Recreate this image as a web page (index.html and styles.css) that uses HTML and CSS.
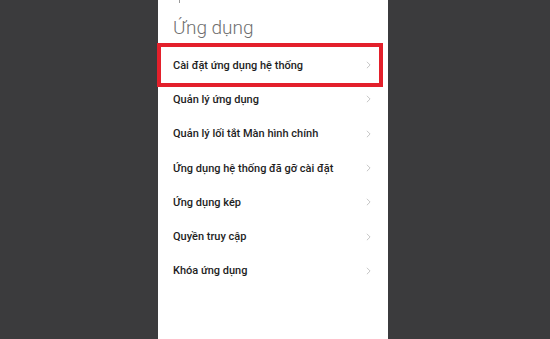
FILE: index.html
```html
<!DOCTYPE html>
<html lang="vi">
<head>
    <meta charset="UTF-8">
    <title>Ứng dụng</title>
    <link rel="stylesheet" href="styles.css">
</head>
<body>
    <div class="screen">
        <span class="top-tick"></span>
        <h1 class="title">Ứng dụng</h1>
        <ul class="menu">
            <li class="menu-item selected">
                <span>Cài đặt ứng dụng hệ thống</span>
                <svg class="chevron" viewBox="0 0 6 10"><polyline points="1,1 5,5 1,9"/></svg>
            </li>
            <li class="menu-item">
                <span>Quản lý ứng dụng</span>
                <svg class="chevron" viewBox="0 0 6 10"><polyline points="1,1 5,5 1,9"/></svg>
            </li>
            <li class="menu-item">
                <span>Quản lý lối tắt Màn hình chính</span>
                <svg class="chevron" viewBox="0 0 6 10"><polyline points="1,1 5,5 1,9"/></svg>
            </li>
            <li class="menu-item">
                <span>Ứng dụng hệ thống đã gỡ cài đặt</span>
                <svg class="chevron" viewBox="0 0 6 10"><polyline points="1,1 5,5 1,9"/></svg>
            </li>
            <li class="menu-item">
                <span>Ứng dụng kép</span>
                <svg class="chevron" viewBox="0 0 6 10"><polyline points="1,1 5,5 1,9"/></svg>
            </li>
            <li class="menu-item">
                <span>Quyền truy cập</span>
                <svg class="chevron" viewBox="0 0 6 10"><polyline points="1,1 5,5 1,9"/></svg>
            </li>
            <li class="menu-item">
                <span>Khóa ứng dụng</span>
                <svg class="chevron" viewBox="0 0 6 10"><polyline points="1,1 5,5 1,9"/></svg>
            </li>
        </ul>
    </div>
</body>
</html>
```

FILE: styles.css
```css
body {
    margin: 0;
    height: 339px;
    overflow: hidden;
    background-color: #3b3b3d;
    font-family: Roboto, 'Noto Sans', sans-serif;
    display: flex;
    padding-left: 158px;
}
.screen {
    position: relative;
    width: 230px;
    height: 339px;
    background-color: #ffffff;
    box-sizing: border-box;
    padding: 0 10px 0 4px;
}
.top-tick {
    position: absolute;
    top: 0;
    left: 21px;
    width: 1px;
    height: 3px;
    background-color: #9a9a9a;
}
.title {
    margin: 0;
    padding: 16px 0 0 11px;
    height: 32px;
    font-size: 19px;
    font-weight: 300;
    color: #6f6f6f;
    line-height: 24px;
}
.menu {
    list-style: none;
    margin: 0;
    padding: 0;
}
.menu-item {
    display: flex;
    align-items: center;
    justify-content: space-between;
    height: 34.3px;
    padding: 0 7px 0 11px;
    font-size: 11px;
    font-weight: 500;
    color: #1e1e1e;
}
.menu-item.selected {
    outline: 4px solid #e3202b;
    outline-offset: 1px;
}
.chevron {
    width: 5px;
    height: 8px;
    fill: none;
    stroke: #b8b8b8;
    stroke-width: 1;
}
```
